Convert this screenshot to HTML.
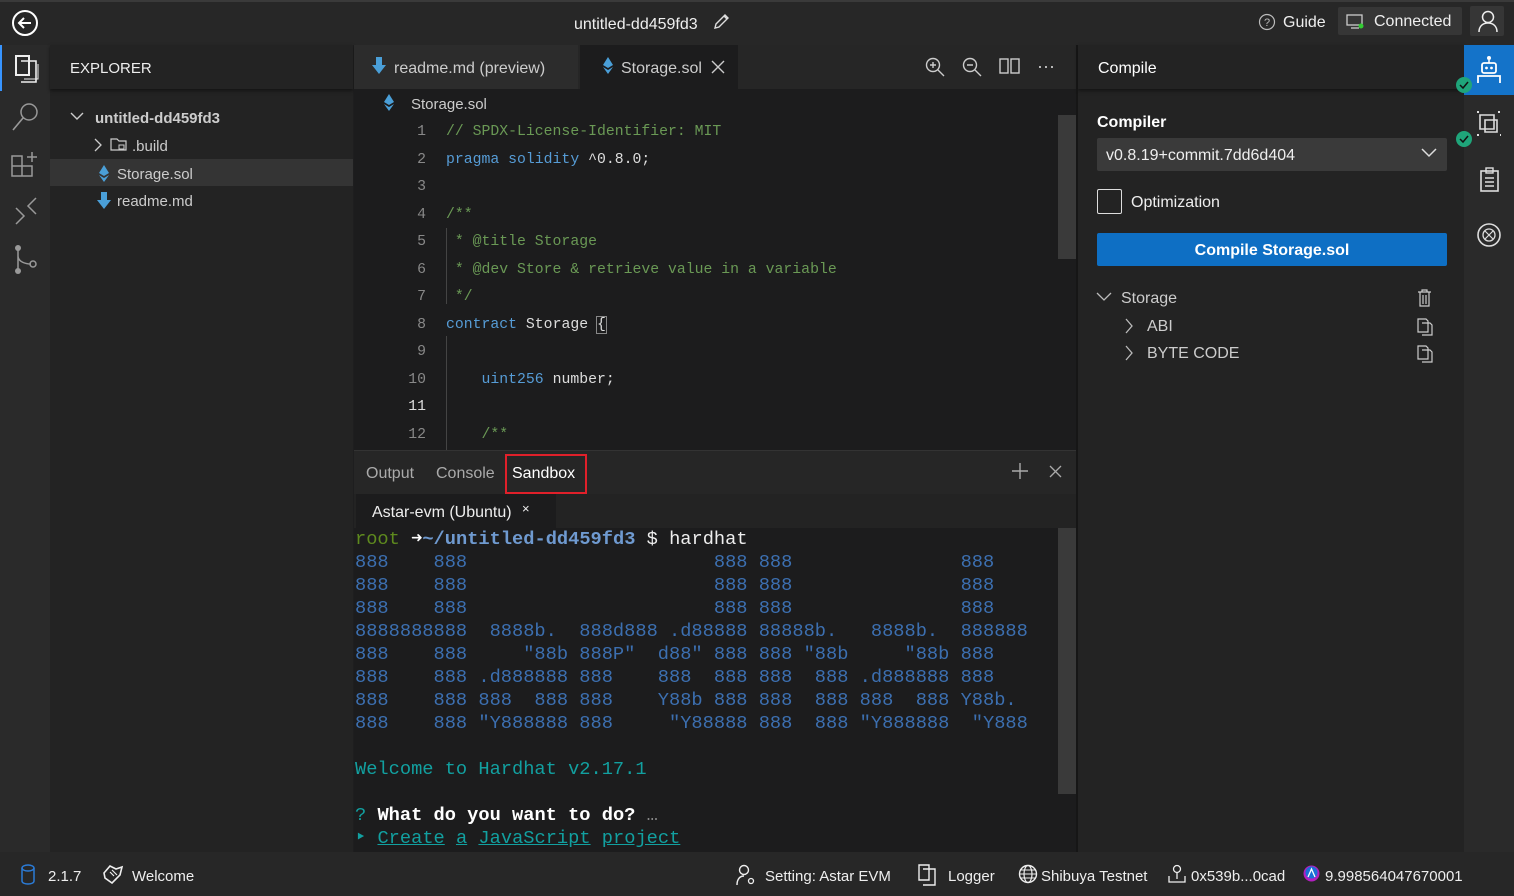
<!DOCTYPE html>
<html><head><meta charset="utf-8"><style>
*{margin:0;padding:0;box-sizing:border-box}
body{width:1514px;height:896px;overflow:hidden;background:#1e1e1f;font-family:"Liberation Sans",sans-serif;color:#ccc;position:relative;font-size:15px}
.a{position:absolute}
.t{margin-top:1px}
.mono{font-family:"Liberation Mono",monospace}
svg{position:absolute}
</style></head><body>
<!-- top bar -->
<div class="a" style="left:0;top:0;width:1514px;height:45px;background:#272727;border-top:2px solid #3a3a3a"></div>
<svg style="left:11px;top:9px" width="28" height="28" viewBox="0 0 28 28"><circle cx="14" cy="14" r="12" fill="none" stroke="#fff" stroke-width="2"/><path d="M20 14H8M13 9l-5 5 5 5" fill="none" stroke="#fff" stroke-width="2"/></svg>
<div class="a" style="left:574px;top:16px;color:#eee;font-size:16px">untitled-dd459fd3</div>
<svg style="left:712px;top:13px" width="18" height="18" viewBox="0 0 18 18"><path d="M3 15l1-4 9-9 3 3-9 9z M12 3l3 3" fill="none" stroke="#ddd" stroke-width="1.4"/></svg>
<svg style="left:1258px;top:13px" width="18" height="18"><circle cx="9" cy="9" r="7.5" fill="none" stroke="#bbb" stroke-width="1.2"/><text x="9" y="13" font-size="11" fill="#bbb" text-anchor="middle" font-family="Liberation Sans">?</text></svg>
<div class="a" style="left:1283px;top:14px;color:#eee;font-size:16px">Guide</div>
<div class="a" style="left:1338px;top:7px;width:124px;height:28px;background:#363636;border-radius:2px"></div>
<svg style="left:1346px;top:14px" width="20" height="16"><rect x="1" y="1" width="15" height="10" fill="none" stroke="#ccc" stroke-width="1.3"/><path d="M5 14h8" stroke="#ccc" stroke-width="1.3"/><circle cx="15" cy="12" r="2.5" fill="#3c3"/></svg>
<div class="a" style="left:1374px;top:13px;color:#eee;font-size:16px">Connected</div>
<div class="a" style="left:1470px;top:6px;width:34px;height:30px;background:#363636;border-radius:2px"></div>
<svg style="left:1477px;top:9px" width="22" height="24"><circle cx="11" cy="8" r="5.5" fill="none" stroke="#eee" stroke-width="1.5"/><path d="M2 23c0-6 4-9 9-9s9 3 9 9" fill="none" stroke="#eee" stroke-width="1.5"/></svg>

<!-- activity bar -->
<div class="a" style="left:0;top:45px;width:50px;height:807px;background:#2a2a2a"></div>
<div class="a" style="left:0;top:45px;width:2px;height:46px;background:#3794ff"></div>
<svg style="left:14px;top:54px" width="26" height="30"><path d="M2 2h13v19H2z" fill="none" stroke="#eee" stroke-width="2"/><path d="M7 7h15v21H7" fill="none" stroke="#eee" stroke-width="1.6"/><path d="M10 25h14V10" fill="none" stroke="#eee" stroke-width="1"/></svg>
<svg style="left:10px;top:100px" width="32" height="32"><circle cx="19" cy="12" r="8" fill="none" stroke="#999" stroke-width="1.5"/><path d="M13 18L3 30" stroke="#999" stroke-width="1.6"/></svg>
<svg style="left:10px;top:148px" width="32" height="32"><path d="M2 8h10v10H2zM2 18h10v10H2zM12 18h10v10H12z" fill="none" stroke="#999" stroke-width="1.5"/><path d="M22 4v10M17 9h10" stroke="#999" stroke-width="1.5"/></svg>
<svg style="left:12px;top:196px" width="28" height="30"><path d="M4 12l8 8-8 8M24 2l-8 8 8 8" fill="none" stroke="#999" stroke-width="1.5"/></svg>
<svg style="left:12px;top:244px" width="28" height="32"><circle cx="6" cy="4" r="3" fill="#999"/><circle cx="6" cy="27" r="3" fill="#999"/><circle cx="21" cy="20" r="3" fill="none" stroke="#999" stroke-width="1.5"/><path d="M6 4v23M6 12c0 6 8 8 13 8" fill="none" stroke="#999" stroke-width="1.5"/></svg>

<!-- explorer -->
<div class="a" style="left:50px;top:45px;width:303px;height:807px;background:#232323"></div>
<div class="a" style="left:50px;top:45px;width:303px;height:44px;background:#232323;box-shadow:0 2px 3px #151515"></div>
<div class="a" style="left:70px;top:60px;color:#eee;font-size:15px">EXPLORER</div>
<svg style="left:70px;top:112px" width="14" height="10"><path d="M1 1l6 6 6-6" fill="none" stroke="#ccc" stroke-width="1.4"/></svg>
<div class="a" style="left:95px;top:110px;color:#ccc;font-size:15px;font-weight:bold">untitled-dd459fd3</div>
<svg style="left:93px;top:138px" width="10" height="14"><path d="M2 1l6 6-6 6" fill="none" stroke="#ccc" stroke-width="1.3"/></svg>
<svg style="left:110px;top:137px" width="18" height="15"><path d="M1 2h6l2 2h7v9H1z" fill="none" stroke="#ccc" stroke-width="1.2"/><rect x="9" y="8" width="5" height="4" fill="none" stroke="#ccc"/></svg>
<div class="a" style="left:132px;top:138px;color:#ccc">.build</div>
<div class="a" style="left:50px;top:159px;width:303px;height:27px;background:#343434"></div>
<svg style="left:98px;top:165px" width="12" height="18"><path d="M6 0l5 8-5 3-5-3z" fill="#4a9fd8"/><path d="M1 10l5 7 5-7-5 3z" fill="#4a9fd8"/></svg>
<div class="a" style="left:117px;top:166px;color:#ccc">Storage.sol</div>
<svg style="left:97px;top:192px" width="14" height="18"><path d="M4 0h6v8h4l-7 9-7-9h4z" fill="#4a9fd8"/></svg>
<div class="a" style="left:117px;top:193px;color:#ccc">readme.md</div>

<!-- editor tabs -->
<div class="a" style="left:354px;top:45px;width:722px;height:44px;background:#262626"></div>
<div class="a" style="left:354px;top:45px;width:224px;height:44px;background:#2c2c2c"></div>
<svg style="left:372px;top:57px" width="14" height="18"><path d="M4 0h6v8h4l-7 9-7-9h4z" fill="#4a9fd8"/></svg>
<div class="a" style="left:394px;top:60px;color:#ccc;font-size:16px">readme.md (preview)</div>
<div class="a" style="left:580px;top:45px;width:158px;height:44px;background:#1c1c1d"></div>
<svg style="left:602px;top:57px" width="12" height="18"><path d="M6 0l5 8-5 3-5-3z" fill="#4a9fd8"/><path d="M1 10l5 7 5-7-5 3z" fill="#4a9fd8"/></svg>
<div class="a" style="left:621px;top:60px;color:#ccc;font-size:16px">Storage.sol</div>
<svg style="left:711px;top:60px" width="14" height="14"><path d="M1 1l12 12M13 1L1 13" stroke="#ccc" stroke-width="1.4"/></svg>
<svg style="left:924px;top:56px" width="22" height="22"><circle cx="9" cy="9" r="6.5" fill="none" stroke="#ccc" stroke-width="1.4"/><path d="M14 14l6 6M6 9h6M9 6v6" stroke="#ccc" stroke-width="1.4"/></svg>
<svg style="left:961px;top:56px" width="22" height="22"><circle cx="9" cy="9" r="6.5" fill="none" stroke="#ccc" stroke-width="1.4"/><path d="M14 14l6 6M6 9h6" stroke="#ccc" stroke-width="1.4"/></svg>
<svg style="left:999px;top:57px" width="22" height="18"><rect x="1" y="2" width="8" height="14" fill="none" stroke="#ccc" stroke-width="1.4"/><rect x="12" y="2" width="8" height="14" fill="none" stroke="#ccc" stroke-width="1.4"/></svg>
<div class="a" style="left:1037px;top:56px;color:#ccc;font-size:18px">···</div>

<!-- editor body -->
<div class="a" style="left:354px;top:89px;width:722px;height:361px;background:#1c1c1d"></div>
<svg style="left:383px;top:94px" width="12" height="18"><path d="M6 0l5 8-5 3-5-3z" fill="#4a9fd8"/><path d="M1 10l5 7 5-7-5 3z" fill="#4a9fd8"/></svg>
<div class="a" style="left:411px;top:96px;color:#ccc">Storage.sol</div>
<div class="a" style="left:1058px;top:115px;width:18px;height:144px;background:#3a3a3a"></div>
<div class="a" style="left:446px;top:228px;width:1px;height:76px;background:#444"></div>
<div class="a" style="left:446px;top:336px;width:1px;height:114px;background:#444"></div>
<div class="a mono" style="left:396px;top:119px;width:30px;text-align:right;font-size:14.8px;line-height:27.5px;color:#888">1<br>2<br>3<br>4<br>5<br>6<br>7<br>8<br>9<br>10<br><span style="color:#ddd">11</span><br>12</div>
<div class="a mono" style="left:446px;top:119px;font-size:14.8px;line-height:27.5px;white-space:pre;color:#ddd"><span style="color:#6a9955">// SPDX-License-Identifier: MIT</span>
<span style="color:#569cd6">pragma solidity</span> ^0.8.0;

<span style="color:#6a9955">/**</span>
<span style="color:#6a9955"> * @title Storage</span>
<span style="color:#6a9955"> * @dev Store &amp; retrieve value in a variable</span>
<span style="color:#6a9955"> */</span>
<span style="color:#569cd6">contract</span> Storage <span style="outline:1px solid #888">{</span>

    <span style="color:#569cd6">uint256</span> number;

    <span style="color:#6a9955">/**</span></div>

<!-- panel -->
<div class="a" style="left:354px;top:450px;width:722px;height:44px;background:#262626;border-top:1px solid #333"></div>
<div class="a" style="left:366px;top:465px;color:#aaa;font-size:16px">Output</div>
<div class="a" style="left:436px;top:465px;color:#aaa;font-size:16px">Console</div>
<div class="a" style="left:505px;top:454px;width:82px;height:40px;border:2px solid #e0202a"></div>
<div class="a" style="left:512px;top:465px;color:#fff;font-size:16px">Sandbox</div>
<svg style="left:1011px;top:462px" width="18" height="18"><path d="M9 1v16M1 9h16" stroke="#aaa" stroke-width="1.4"/></svg>
<svg style="left:1049px;top:465px" width="13" height="13"><path d="M1 1l11 11M12 1L1 12" stroke="#aaa" stroke-width="1.3"/></svg>
<div class="a" style="left:354px;top:494px;width:722px;height:34px;background:#232323"></div>
<div class="a" style="left:356px;top:494px;width:200px;height:34px;background:#1c1c1d"></div>
<div class="a" style="left:372px;top:504px;color:#eee;font-size:16px">Astar-evm (Ubuntu)</div>
<div class="a" style="left:522px;top:501px;color:#eee;font-size:13px">×</div>
<div class="a" style="left:354px;top:528px;width:722px;height:324px;background:#1c1c1d"></div>
<div class="a" style="left:1058px;top:528px;width:18px;height:266px;background:#3a3a3a"></div>
<div class="a mono" style="left:355px;top:528px;font-size:18.7px;line-height:23px;white-space:pre;color:#3c6fb0"><span style="color:#5e8a1e">root</span> <span style="color:#fff">➜</span><b style="color:#6f9ad0">~/untitled-dd459fd3</b> <span style="color:#eee">$ hardhat</span>
888    888                      888 888               888
888    888                      888 888               888
888    888                      888 888               888
8888888888  8888b.  888d888 .d88888 88888b.   8888b.  888888
888    888     "88b 888P"  d88" 888 888 "88b     "88b 888
888    888 .d888888 888    888  888 888  888 .d888888 888
888    888 888  888 888    Y88b 888 888  888 888  888 Y88b.
888    888 "Y888888 888     "Y88888 888  888 "Y888888  "Y888

<span style="color:#12a0a0">Welcome to Hardhat v2.17.1</span>

<span style="color:#12a0a0">?</span> <b style="color:#fff">What do you want to do?</b> <span style="color:#888">…</span>
<span style="color:#12a0a0">‣ <u>Create</u> <u>a</u> <u>JavaScript</u> <u>project</u></span></div>

<!-- right panel -->
<div class="a" style="left:1076px;top:45px;width:2px;height:807px;background:#161616"></div>
<div class="a" style="left:1078px;top:45px;width:386px;height:807px;background:#232323"></div>
<div class="a" style="left:1078px;top:45px;width:386px;height:44px;background:#232323;box-shadow:0 2px 3px #151515"></div>
<div class="a" style="left:1098px;top:60px;color:#fff;font-size:16px">Compile</div>
<div class="a" style="left:1097px;top:114px;color:#fff;font-size:16px;font-weight:bold">Compiler</div>
<div class="a" style="left:1097px;top:138px;width:350px;height:33px;background:#3a3a3a;border-radius:2px"></div>
<div class="a" style="left:1106px;top:147px;color:#eee;font-size:16px">v0.8.19+commit.7dd6d404</div>
<svg style="left:1421px;top:148px" width="16" height="10"><path d="M1 1l7 7 7-7" fill="none" stroke="#ddd" stroke-width="1.5"/></svg>
<div class="a" style="left:1097px;top:189px;width:25px;height:25px;border:1.5px solid #ddd;border-radius:2px"></div>
<div class="a" style="left:1131px;top:194px;color:#eee;font-size:16px">Optimization</div>
<div class="a" style="left:1097px;top:233px;width:350px;height:33px;background:#0e6fc4;border-radius:2px"></div>
<div class="a" style="left:1097px;top:242px;width:350px;text-align:center;color:#fff;font-size:16px;font-weight:bold">Compile Storage.sol</div>
<svg style="left:1096px;top:292px" width="16" height="10"><path d="M1 1l7 7 7-7" fill="none" stroke="#bbb" stroke-width="1.3"/></svg>
<div class="a" style="left:1121px;top:290px;color:#ccc;font-size:16px">Storage</div>
<svg style="left:1124px;top:318px" width="10" height="16"><path d="M2 1l6 7-6 7" fill="none" stroke="#bbb" stroke-width="1.3"/></svg>
<div class="a" style="left:1147px;top:318px;color:#ccc;font-size:16px">ABI</div>
<svg style="left:1124px;top:345px" width="10" height="16"><path d="M2 1l6 7-6 7" fill="none" stroke="#bbb" stroke-width="1.3"/></svg>
<div class="a" style="left:1147px;top:345px;color:#ccc;font-size:16px">BYTE CODE</div>
<svg style="left:1417px;top:289px" width="15" height="18"><path d="M1 3h13M5 3V1h5v2M3 3v14h9V3M6 6v9M9 6v9" fill="none" stroke="#ccc" stroke-width="1.2"/></svg>
<svg style="left:1417px;top:318px" width="16" height="18"><path d="M1 1h8l2 2v11H1z M5 5h8l2 2v10H5" fill="none" stroke="#ccc" stroke-width="1.2"/></svg>
<svg style="left:1417px;top:345px" width="16" height="18"><path d="M1 1h8l2 2v11H1z M5 5h8l2 2v10H5" fill="none" stroke="#ccc" stroke-width="1.2"/></svg>

<!-- right activity -->
<div class="a" style="left:1464px;top:45px;width:50px;height:807px;background:#2a2a2a"></div>
<div class="a" style="left:1464px;top:45px;width:50px;height:50px;background:#1473c9"></div>
<svg style="left:1476px;top:55px" width="26" height="30"><circle cx="13" cy="3" r="2" fill="#fff"/><path d="M13 5v3" stroke="#fff" stroke-width="1.5"/><rect x="6" y="8" width="14" height="10" rx="2" fill="none" stroke="#fff" stroke-width="1.8"/><circle cx="10.5" cy="13" r="1.4" fill="#fff"/><circle cx="15.5" cy="13" r="1.4" fill="#fff"/><path d="M2 28v-7h22v7" fill="none" stroke="#fff" stroke-width="1.8"/></svg>
<svg style="left:1455px;top:76px" width="18" height="18"><circle cx="9" cy="9" r="8" fill="#1fa57a"/><path d="M5 9l3 3 5-6" fill="none" stroke="#111" stroke-width="1.5"/></svg>
<svg style="left:1476px;top:111px" width="26" height="26"><path d="M4 4h14v14H4z M9 9h12v12H9z" fill="none" stroke="#ddd" stroke-width="1.6"/><path d="M1 1h2M22 1h2M1 24h2M24 24h1" stroke="#ddd" stroke-width="2"/></svg>
<svg style="left:1455px;top:130px" width="18" height="18"><circle cx="9" cy="9" r="8" fill="#1fa57a"/><path d="M5 9l3 3 5-6" fill="none" stroke="#111" stroke-width="1.5"/></svg>
<svg style="left:1479px;top:167px" width="22" height="26"><rect x="2" y="4" width="17" height="20" fill="none" stroke="#ddd" stroke-width="1.6"/><rect x="7" y="1" width="7" height="5" fill="none" stroke="#ddd" stroke-width="1.4"/><path d="M6 11h9M6 15h9M6 19h9" stroke="#ddd" stroke-width="1.4"/></svg>
<svg style="left:1476px;top:222px" width="26" height="26"><circle cx="13" cy="13" r="11" fill="none" stroke="#ddd" stroke-width="1.6"/><circle cx="13" cy="13" r="6" fill="none" stroke="#ddd" stroke-width="1.3"/><path d="M9 9l8 8M17 9l-8 8" stroke="#ddd" stroke-width="1.2"/></svg>

<!-- status bar -->
<div class="a" style="left:0;top:852px;width:1514px;height:44px;background:#272727"></div>
<svg style="left:20px;top:864px" width="16" height="22"><ellipse cx="8" cy="4" rx="6" ry="3" fill="none" stroke="#2b7bd6" stroke-width="1.5"/><path d="M2 4v13c0 4 12 4 12 0V4" fill="none" stroke="#2b7bd6" stroke-width="1.5"/></svg>
<div class="a" style="left:48px;top:868px;color:#eee;font-size:15px">2.1.7</div>
<svg style="left:102px;top:864px" width="22" height="20"><path d="M2 9l6-7 6 3 6-2-2 8-8 8-7-5z" fill="none" stroke="#eee" stroke-width="1.6"/><path d="M8 8l4 4M10 6l5 5" stroke="#eee" stroke-width="1.2"/></svg>
<div class="a" style="left:132px;top:868px;color:#eee;font-size:15px">Welcome</div>
<svg style="left:735px;top:864px" width="22" height="22"><circle cx="9" cy="6" r="4.5" fill="none" stroke="#eee" stroke-width="1.4"/><path d="M2 21c0-6 3-9 7-9" fill="none" stroke="#eee" stroke-width="1.4"/><circle cx="16" cy="17" r="2.5" fill="none" stroke="#eee" stroke-width="1.3"/></svg>
<div class="a" style="left:765px;top:868px;color:#eee;font-size:15px">Setting: Astar EVM</div>
<svg style="left:918px;top:864px" width="20" height="22"><path d="M1 1h10v15H1z M5 5h12v16H5" fill="none" stroke="#eee" stroke-width="1.4"/></svg>
<div class="a" style="left:948px;top:868px;color:#eee;font-size:15px">Logger</div>
<svg style="left:1018px;top:864px" width="20" height="20"><circle cx="10" cy="10" r="8.5" fill="none" stroke="#eee" stroke-width="1.4"/><ellipse cx="10" cy="10" rx="4" ry="8.5" fill="none" stroke="#eee" stroke-width="1.2"/><path d="M1.5 10h17M3 6h14M3 14h14" stroke="#eee" stroke-width="1.1"/></svg>
<div class="a" style="left:1041px;top:868px;color:#eee;font-size:15px">Shibuya Testnet</div>
<svg style="left:1167px;top:864px" width="20" height="20"><circle cx="10" cy="5" r="3.5" fill="none" stroke="#eee" stroke-width="1.3"/><path d="M10 9v6M2 12v6h16v-6" fill="none" stroke="#eee" stroke-width="1.3"/></svg>
<div class="a" style="left:1191px;top:868px;color:#eee;font-size:15px">0x539b...0cad</div>
<svg style="left:1303px;top:865px" width="17" height="17"><circle cx="8.5" cy="8.5" r="8" fill="#b21fbf"/><circle cx="8.5" cy="7.5" r="6" fill="#1b6fd6"/><path d="M5 12l3.5-8 3.5 8" fill="none" stroke="#fff" stroke-width="1.3"/></svg>
<div class="a" style="left:1325px;top:868px;color:#eee;font-size:15px">9.998564047670001</div>
</body></html>
